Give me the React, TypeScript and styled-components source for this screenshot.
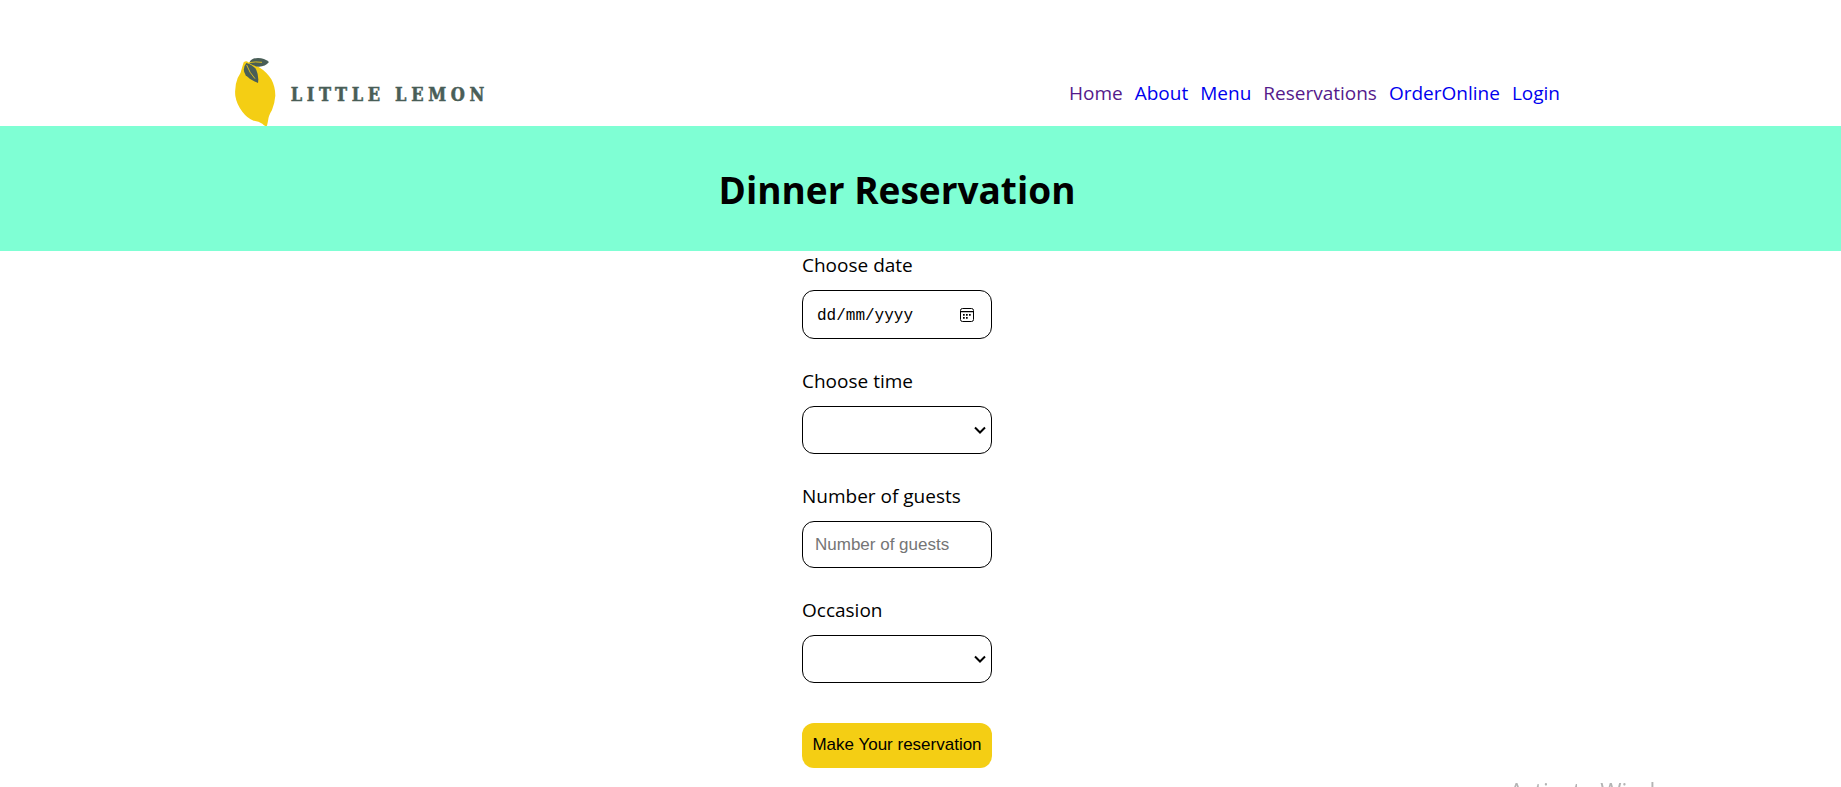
import React from 'react';
import styled, { createGlobalStyle } from 'styled-components';

const GlobalStyle = createGlobalStyle`
  *, *::before, *::after { box-sizing: border-box; }
  body {
    margin: 0;
    background: #fff;
    color: #000;
    font-family: 'Open Sans', 'Noto Sans', sans-serif;
    font-size: 19px;
  }
`;

const Centered = styled.div`
  display: flex;
  justify-content: center;
  padding-right: 47px;
`;

const Header = styled.header`
  display: flex;
  flex: 0 1 1326px;
  align-items: center;
  justify-content: space-between;
  padding-top: 57px;
`;

const HomeLink = styled.a`
  display: block;
  line-height: 0;
`;

const Nav = styled.nav`
  display: flex;
  flex-wrap: wrap;
  gap: 12px;
  padding-top: 2px;
`;

const NavLink = styled.a<{ $visited?: boolean }>`
  color: ${(p) => (p.$visited ? '#551a8b' : '#0000ee')};
  line-height: 26px;
  text-decoration: none;
`;

const Banner = styled(Centered)`
  background: #7fffd4;
`;

const Title = styled.h1`
  margin: 0;
  padding: 36px 0 33px;
  font-size: 37px;
  line-height: 56px;
`;

const Form = styled.form`
  display: flex;
  flex-direction: column;
  gap: 28px;
  width: 190px;
`;

const Field = styled.div`
  display: flex;
  flex-direction: column;
`;

const Label = styled.label`
  padding: 1px 0 12px;
  line-height: 26px;
  white-space: nowrap;
`;

const controlStyle = `
  width: 100%;
  margin: 0;
  border: 1px solid #000;
  border-radius: 12px;
  background: #fff;
  color: #000;
  font-family: 'Liberation Sans', Arial, sans-serif;
  font-size: 17px;
`;

const Input = styled.input`
  ${controlStyle}
  height: 47px;
  padding: 0 12px;
  &::placeholder { color: #757575; opacity: 1; }
`;

const ControlBox = styled.div`
  position: relative;
  display: flex;
  align-items: center;
`;

const DateInput = styled(Input)`
  height: 49px;
  padding: 2px 40px 0 14px;
  font-family: 'Liberation Mono', monospace;
  font-size: 16px;
  &::placeholder { color: #000; }
`;

const ControlIcon = styled.svg<{ $right: number }>`
  position: absolute;
  right: ${(p) => p.$right}px;
  pointer-events: none;
`;

const SelectInput = styled.select`
  ${controlStyle}
  height: 48px;
  padding: 0 24px 0 12px;
  appearance: none;
`;

const Submit = styled.button`
  height: 45px;
  margin-top: 12px;
  padding: 0 0 2px;
  border: 0;
  border-radius: 12px;
  background: #f4ce14;
  color: #000;
  font-family: 'Liberation Sans', Arial, sans-serif;
  font-size: 17px;
  white-space: nowrap;
`;

const Watermark = styled.div`
  position: fixed;
  right: 143px;
  bottom: -18px;
  color: #b4b4b4;
  font-size: 23px;
  line-height: 28px;
  pointer-events: none;
  white-space: nowrap;
`;

const Logo = () => (
  <svg width="260" height="69" viewBox="27 21 780 207" role="img" aria-label="Little Lemon">
    <path
      fill="#f4ce14"
      d="M56 37Q64 31 70 37L100 50Q126 66 139 88Q151 111 151 137Q149 161 141 180Q130 198 129 213L126 227Q120 231 112 221Q101 213 86 212Q67 205 52 185Q35 163 31 138Q28 108 38 84Q49 67 51 53Z"
    />
    <path fill="#495e57" d="M73 38Q79 24 99 24Q118 24 132 36Q121 50 102 50Q86 49 73 40Z" />
    <path fill="#495e57" d="M64 39Q84 44 94 60Q102 78 99 99Q76 91 62 76Q50 56 64 39Z" />
    <path fill="none" stroke="#f4ce14" strokeWidth="2.5" d="M72 38Q92 34 111 37M65 45Q73 68 90 86" />
    <text
      x="197"
      y="153"
      fill="#495e57"
      stroke="#495e57"
      strokeWidth="1.5"
      fontFamily="'DejaVu Serif Condensed', 'DejaVu Serif', serif"
      fontSize="54"
      fontWeight="700"
      letterSpacing="14"
    >
      LITTLE LEMON
    </text>
  </svg>
);

const Select = ({ id }: { id: string }) => (
  <ControlBox>
    <SelectInput id={id} />
    <ControlIcon $right={6} width="12" height="8" viewBox="0 0 12 8" aria-hidden="true">
      <path fill="none" stroke="#000" strokeWidth="2" d="M1 1.5L6 6.5L11 1.5" />
    </ControlIcon>
  </ControlBox>
);

const links = [
  { text: 'Home', href: '#home', visited: true },
  { text: 'About', href: '#about' },
  { text: 'Menu', href: '#menu' },
  { text: 'Reservations', href: '#reservations', visited: true },
  { text: 'OrderOnline', href: '#order' },
  { text: 'Login', href: '#login' },
];

export default function App() {
  return (
    <>
      <GlobalStyle />
      <Centered>
        <Header>
          <HomeLink href="#home">
            <Logo />
          </HomeLink>
          <Nav>
            {links.map((link) => (
              <NavLink key={link.text} href={link.href} $visited={link.visited}>
                {link.text}
              </NavLink>
            ))}
          </Nav>
        </Header>
      </Centered>
      <main>
        <Banner>
          <Title>Dinner Reservation</Title>
        </Banner>
        <Centered>
          <Form onSubmit={(e) => e.preventDefault()}>
            <Field>
              <Label htmlFor="date">Choose date</Label>
              <ControlBox>
                <DateInput id="date" type="text" inputMode="numeric" placeholder="dd/mm/yyyy" />
                <ControlIcon $right={18} width="14" height="14" viewBox="0 0 14 14" aria-hidden="true">
                  <rect x="0.5" y="0.5" width="13" height="13" rx="2" fill="none" stroke="#000" />
                  <path
                    fill="#000"
                    d="M1 3h12v1.3H1zM6 6h1.7v1.7H6zM9 6h1.7v1.7H9zM3 6h1.7v1.7H3zM3 9h1.7v1.7H3zM6 9h1.7v1.7H6z"
                  />
                </ControlIcon>
              </ControlBox>
            </Field>
            <Field>
              <Label htmlFor="time">Choose time</Label>
              <Select id="time" />
            </Field>
            <Field>
              <Label htmlFor="guests">Number of guests</Label>
              <Input id="guests" type="number" min="1" placeholder="Number of guests" />
            </Field>
            <Field>
              <Label htmlFor="occasion">Occasion</Label>
              <Select id="occasion" />
            </Field>
            <Submit type="submit">Make Your reservation</Submit>
          </Form>
        </Centered>
      </main>
      <Watermark>Activate Windows</Watermark>
    </>
  );
}
